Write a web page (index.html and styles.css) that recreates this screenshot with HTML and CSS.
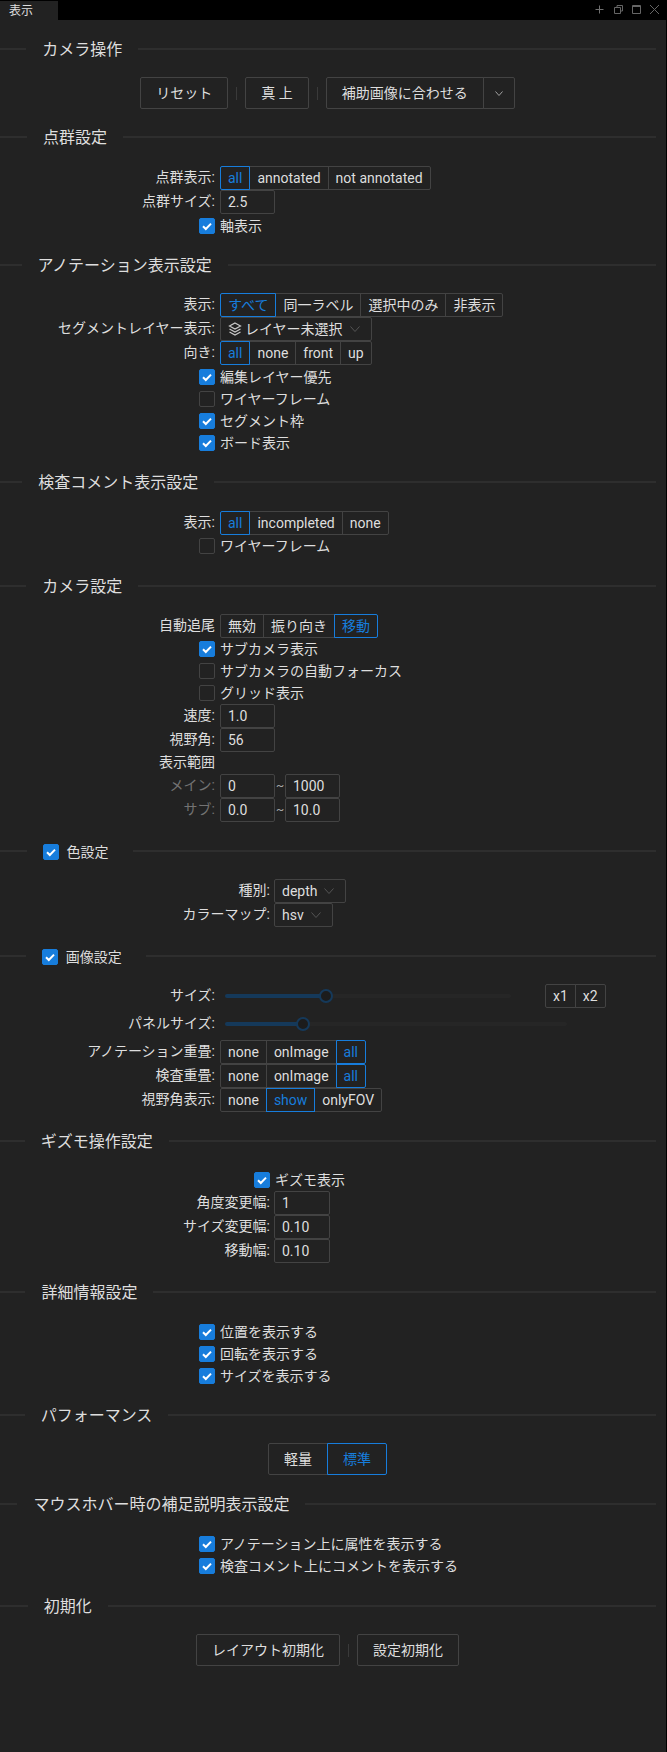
FILE: index.html
```html
<!DOCTYPE html>
<html lang="ja">
<head>
<meta charset="utf-8">
<title>表示</title>
<link rel="stylesheet" href="styles.css">
</head>
<body>
<header class="tabbar">
  <div class="tab">表示</div>
  <div class="winctl">
    <svg class="ico plus" viewBox="0 0 9 9"><path d="M4.5 .5v8M.5 4.5h8"/></svg>
    <svg class="ico" viewBox="0 0 9 9"><path d="M3 2.5V.5h5.5v5.5H6.5M.5 2.5h6v6h-6z"/></svg>
    <svg class="ico" viewBox="0 0 9 9"><path d="M.5 .5h8v8h-8zM.5 1.500h8"/></svg>
    <svg class="ico" viewBox="0 0 9 9"><path d="M0 0l9 9M9 0l-9 9"/></svg>
  </div>
</header>
<main class="panel">

  <section class="section first">
    <h2 class="title"><span class="title-text">カメラ操作</span></h2>
    <div class="actions">
      <button class="btn">リセット</button>
      <i class="vsep"></i>
      <button class="btn">真 上</button>
      <i class="vsep"></i>
      <div class="combo">
        <button class="btn">補助画像に合わせる</button>
        <button class="btn btn-arrow"><svg class="chev small" viewBox="0 0 8 5"><path d="M.5 .5L4 4.5 7.5 .5"/></svg></button>
      </div>
    </div>
  </section>

  <section class="section snug roomy">
    <h2 class="title"><span class="title-text">点群設定</span></h2>
    <div class="form">
      <div class="row"><label class="lbl">点群表示:</label><div class="seg"><span class="seg-item on">all</span><span class="seg-item">annotated</span><span class="seg-item">not annotated</span></div></div>
      <div class="row"><label class="lbl">点群サイズ:</label><span class="input">2.5</span></div>
      <div class="check lead"><span class="box on"><svg viewBox="0 0 16 16"><path d="M4 8.2l2.8 2.8L12 5.6"/></svg></span>軸表示</div>
    </div>
  </section>

  <section class="section snug">
    <h2 class="title"><span class="title-text">アノテーション表示設定</span></h2>
    <div class="form">
      <div class="row"><label class="lbl">表示:</label><div class="seg"><span class="seg-item on">すべて</span><span class="seg-item">同一ラベル</span><span class="seg-item">選択中のみ</span><span class="seg-item">非表示</span></div></div>
      <div class="row"><label class="lbl">セグメントレイヤー表示:</label>
        <span class="select"><svg class="layers" viewBox="0 0 14 14"><path d="M7 1l5.5 3L7 7 1.5 4z"/><path d="M1.5 7L7 10l5.500-3M1.500 10L7 13l5.500-3"/></svg>レイヤー未選択<svg class="chev" viewBox="0 0 10 6"><path d="M.5 .5L5 5.500 9.500 .5"/></svg></span>
      </div>
      <div class="row"><label class="lbl">向き:</label><div class="seg"><span class="seg-item on">all</span><span class="seg-item">none</span><span class="seg-item">front</span><span class="seg-item">up</span></div></div>
      <div class="check lead"><span class="box on"><svg viewBox="0 0 16 16"><path d="M4 8.2l2.8 2.8L12 5.6"/></svg></span>編集レイヤー優先</div>
      <div class="check"><span class="box"></span>ワイヤーフレーム</div>
      <div class="check"><span class="box on"><svg viewBox="0 0 16 16"><path d="M4 8.2l2.8 2.8L12 5.6"/></svg></span>セグメント枠</div>
      <div class="check"><span class="box on"><svg viewBox="0 0 16 16"><path d="M4 8.2l2.8 2.8L12 5.6"/></svg></span>ボード表示</div>
    </div>
  </section>

  <section class="section snug roomy">
    <h2 class="title"><span class="title-text">検査コメント表示設定</span></h2>
    <div class="form">
      <div class="row"><label class="lbl">表示:</label><div class="seg"><span class="seg-item on">all</span><span class="seg-item">incompleted</span><span class="seg-item">none</span></div></div>
      <div class="check"><span class="box"></span>ワイヤーフレーム</div>
    </div>
  </section>

  <section class="section">
    <h2 class="title"><span class="title-text">カメラ設定</span></h2>
    <div class="form">
      <div class="row"><label class="lbl">自動追尾</label><div class="seg"><span class="seg-item">無効</span><span class="seg-item">振り向き</span><span class="seg-item on">移動</span></div></div>
      <div class="check"><span class="box on"><svg viewBox="0 0 16 16"><path d="M4 8.2l2.8 2.8L12 5.6"/></svg></span>サブカメラ表示</div>
      <div class="check"><span class="box"></span>サブカメラの自動フォーカス</div>
      <div class="check"><span class="box"></span>グリッド表示</div>
      <div class="row"><label class="lbl">速度:</label><span class="input">1.0</span></div>
      <div class="row"><label class="lbl">視野角:</label><span class="input">56</span></div>
      <div class="row row-text"><label class="lbl">表示範囲</label></div>
      <div class="row"><label class="lbl muted">メイン:</label><span class="input">0</span><span class="tilde">~</span><span class="input">1000</span></div>
      <div class="row"><label class="lbl muted">サブ:</label><span class="input">0.0</span><span class="tilde">~</span><span class="input">10.0</span></div>
    </div>
  </section>

  <section class="section">
    <h2 class="title"><span class="title-text has-check"><span class="box on"><svg viewBox="0 0 16 16"><path d="M4 8.2l2.8 2.8L12 5.6"/></svg></span>色設定</span></h2>
    <div class="form wide">
      <div class="row"><label class="lbl">種別:</label><span class="select">depth<svg class="chev" viewBox="0 0 10 6"><path d="M.5 .5L5 5.500 9.500 .5"/></svg></span></div>
      <div class="row"><label class="lbl">カラーマップ:</label><span class="select">hsv<svg class="chev" viewBox="0 0 10 6"><path d="M.5 .5L5 5.500 9.500 .5"/></svg></span></div>
    </div>
  </section>

  <section class="section">
    <h2 class="title"><span class="title-text has-check"><span class="box on"><svg viewBox="0 0 16 16"><path d="M4 8.2l2.8 2.8L12 5.6"/></svg></span>画像設定</span></h2>
    <div class="form">
      <div class="row"><label class="lbl">サイズ:</label>
        <div class="slider slider-size"><div class="slider-fill" style="width:35.3%"><i class="slider-thumb"></i></div></div>
        <div class="seg seg-x"><span class="seg-item">x1</span><span class="seg-item">x2</span></div>
      </div>
      <div class="row row-slider"><label class="lbl">パネルサイズ:</label>
        <div class="slider slider-panel"><div class="slider-fill" style="width:22.8%"><i class="slider-thumb"></i></div></div>
      </div>
      <div class="row"><label class="lbl">アノテーション重畳:</label><div class="seg"><span class="seg-item">none</span><span class="seg-item">onImage</span><span class="seg-item on">all</span></div></div>
      <div class="row"><label class="lbl">検査重畳:</label><div class="seg"><span class="seg-item">none</span><span class="seg-item">onImage</span><span class="seg-item on">all</span></div></div>
      <div class="row"><label class="lbl">視野角表示:</label><div class="seg"><span class="seg-item">none</span><span class="seg-item on">show</span><span class="seg-item">onlyFOV</span></div></div>
    </div>
  </section>

  <section class="section">
    <h2 class="title"><span class="title-text">ギズモ操作設定</span></h2>
    <div class="form wide">
      <div class="check"><span class="box on"><svg viewBox="0 0 16 16"><path d="M4 8.2l2.8 2.8L12 5.6"/></svg></span>ギズモ表示</div>
      <div class="row"><label class="lbl">角度変更幅:</label><span class="input">1</span></div>
      <div class="row"><label class="lbl">サイズ変更幅:</label><span class="input">0.10</span></div>
      <div class="row"><label class="lbl">移動幅:</label><span class="input">0.10</span></div>
    </div>
  </section>

  <section class="section roomy">
    <h2 class="title"><span class="title-text">詳細情報設定</span></h2>
    <div class="form">
      <div class="check"><span class="box on"><svg viewBox="0 0 16 16"><path d="M4 8.2l2.8 2.8L12 5.6"/></svg></span>位置を表示する</div>
      <div class="check"><span class="box on"><svg viewBox="0 0 16 16"><path d="M4 8.2l2.8 2.8L12 5.6"/></svg></span>回転を表示する</div>
      <div class="check"><span class="box on"><svg viewBox="0 0 16 16"><path d="M4 8.2l2.8 2.8L12 5.6"/></svg></span>サイズを表示する</div>
    </div>
  </section>

  <section class="section snug">
    <h2 class="title"><span class="title-text">パフォーマンス</span></h2>
    <div class="actions">
      <div class="combo">
        <button class="btn">軽量</button>
        <button class="btn btn-on">標準</button>
      </div>
    </div>
  </section>

  <section class="section roomy">
    <h2 class="title"><span class="title-text">マウスホバー時の補足説明表示設定</span></h2>
    <div class="form">
      <div class="check"><span class="box on"><svg viewBox="0 0 16 16"><path d="M4 8.2l2.8 2.8L12 5.6"/></svg></span>アノテーション上に属性を表示する</div>
      <div class="check"><span class="box on"><svg viewBox="0 0 16 16"><path d="M4 8.2l2.8 2.8L12 5.6"/></svg></span>検査コメント上にコメントを表示する</div>
    </div>
  </section>

  <section class="section">
    <h2 class="title"><span class="title-text">初期化</span></h2>
    <div class="actions">
      <button class="btn">レイアウト初期化</button>
      <i class="vsep"></i>
      <button class="btn">設定初期化</button>
    </div>
  </section>

</main>
</body>
</html>
```
FILE: styles.css
```css
* { box-sizing: border-box; }

html, body {
  margin: 0;
  padding: 0;
}

body {
  background: #000;
  color: #dedede;
  font-family: Roboto, "Noto Sans CJK JP", sans-serif;
  font-size: 14px;
  line-height: 22px;
  height: 1752px;
  overflow: hidden;
}

/* tab strip */
.tabbar {
  display: flex;
  justify-content: space-between;
  height: 20px;
}

.tab {
  width: 58px;
  margin-top: 1px;
  padding-left: 9px;
  background: #222;
  font-size: 12px;
  line-height: 20px;
}

.winctl {
  display: flex;
  align-items: center;
  gap: 9px;
  padding: 0 8px 1px 0;
}

.ico {
  width: 9px;
  height: 9px;
  fill: none;
  stroke: #666;
  stroke-width: 1;
  overflow: visible;
}

.plus {
  stroke: #707070;
  margin-right: 1px;
}

/* panel */
.panel {
  width: 666px;
  height: 1732px;
  padding: 0 10px 0 0;
  background: #222;
}

.section { margin-top: 18px; }
.section.snug { margin-top: 17px; }
.section.first { margin-top: 0; padding-top: 18px; }

.title {
  display: flex;
  align-items: center;
  height: 22px;
  margin: 0 0 17px -1px;
  font-size: 16px;
  font-weight: 400;
  line-height: 22px;
  white-space: nowrap;
}

.roomy .title { margin-bottom: 18px; }

.title::before,
.title::after {
  content: "";
  height: 2px;
  background: #2e2e2e;
}

.title::before { width: 5%; }
.title::after { width: 95%; }

.title-text {
  display: flex;
  align-items: center;
  padding: 2px 16px 0;
}

.has-check {
  font-size: 14px;
  padding-right: 24px;
}

.has-check .box { margin-right: 8px; }

/* buttons */
.actions {
  display: flex;
  justify-content: center;
  align-items: center;
  padding-right: 1px;
}

.btn {
  height: 32px;
  padding: 0 15px;
  border: 1px solid #434343;
  border-radius: 2px;
  background: transparent;
  color: #dedede;
  font: inherit;
  white-space: nowrap;
}

.btn-arrow {
  display: flex;
  align-items: center;
  justify-content: center;
  width: 32px;
  padding: 0;
}

.btn-on {
  position: relative;
  border-color: #177ddc;
  color: #177ddc;
}

.combo { display: flex; }

.combo .btn:first-child {
  border-radius: 2px 0 0 2px;
}

.combo .btn + .btn {
  margin-left: -1px;
  border-radius: 0 2px 2px 0;
}

.vsep {
  width: 1px;
  height: 13px;
  margin: 0 8px;
  background: #3a3a3a;
}

/* form rows */
.form { --lw: 215px; }
.form.wide { --lw: 270px; }
.form.wide .lbl { margin-right: 4px; }

.row {
  display: flex;
  align-items: center;
  height: 24px;
}

.row-text { height: 22px; }
.row-slider { height: 32px; }

.lbl {
  flex: none;
  width: var(--lw);
  margin-right: 5px;
  margin-top: -2px;
  text-align: right;
  white-space: nowrap;
}

.lbl.muted { color: #737373; }

.seg {
  display: flex;
  height: 24px;
}

.seg-item {
  height: 24px;
  padding: 0 7px;
  border: 1px solid #434343;
  line-height: 22px;
  white-space: nowrap;
}

.seg-item + .seg-item { margin-left: -1px; }
.seg-item:first-child { border-radius: 2px 0 0 2px; }
.seg-item:last-child { border-radius: 0 2px 2px 0; }

.seg-item.on {
  position: relative;
  border-color: #177ddc;
  color: #177ddc;
}

.input {
  flex: none;
  width: 55px;
  height: 24px;
  padding: 0 7px;
  border: 1px solid #434343;
  border-radius: 2px;
  line-height: 22px;
}

.wide .input { width: 56px; }

.tilde {
  width: 10px;
  text-align: center;
  color: #a8a8a8;
  font-size: 12px;
}

.select {
  display: flex;
  align-items: center;
  height: 24px;
  padding: 0 11px 0 7px;
  border: 1px solid #434343;
  border-radius: 2px;
  white-space: nowrap;
}

.layers {
  width: 14px;
  height: 14px;
  margin-right: 3px;
  fill: none;
  stroke: #c8c8c8;
  stroke-width: 1.2;
}

.chev {
  width: 10px;
  height: 6px;
  margin-left: 7px;
  fill: none;
  stroke: #555;
  stroke-width: 1;
}

.chev.small {
  width: 8px;
  height: 5px;
  margin: 0;
  stroke: #a0a0a0;
}

/* checkboxes */
.check {
  display: flex;
  align-items: center;
  height: 22px;
  padding-left: calc(var(--lw) - 16px);
  white-space: nowrap;
}

.check.lead { margin-top: 1px; }

.box {
  flex: none;
  width: 16px;
  height: 16px;
  margin-right: 5px;
  border: 1px solid #434343;
  border-radius: 2px;
}

.box.on {
  border-color: #177ddc;
  background: #177ddc;
}

.box svg {
  display: block;
  width: 16px;
  height: 16px;
  margin: -1px;
  fill: none;
  stroke: #fff;
  stroke-width: 2;
}

/* sliders */
.slider {
  flex: none;
  height: 4px;
  background: #262626;
  border-radius: 2px;
}

.slider-size { width: 286px; margin-right: 34px; }
.slider-panel { width: 342px; }

.lbl + .slider { margin-left: 5px; }

.slider-fill {
  position: relative;
  height: 4px;
  background: #15395a;
  border-radius: 2px;
}

.slider-thumb {
  position: absolute;
  right: -7px;
  top: -5px;
  width: 14px;
  height: 14px;
  border: 2px solid #15395a;
  border-radius: 50%;
  background: #1c1c1c;
}
```
